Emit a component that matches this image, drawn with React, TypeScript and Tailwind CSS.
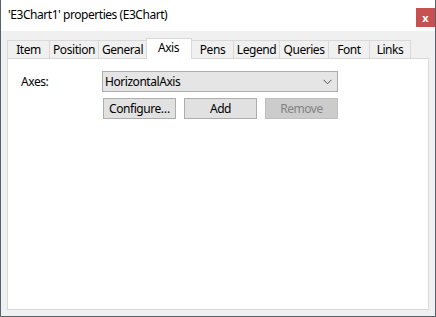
import React from "react";

const tabs = [
  { label: "Item", w: 42 },
  { label: "Position", w: 49 },
  { label: "General", w: 48 },
  { label: "Axis", w: 45, sel: true },
  { label: "Pens", w: 42 },
  { label: "Legend", w: 46 },
  { label: "Queries", w: 49 },
  { label: "Font", w: 41 },
  { label: "Links", w: 41 },
];

export default function App() {
  const font = { fontFamily: '"Noto Sans", "Open Sans", sans-serif' };
  return (
    <div
      className="w-[436px] h-[317px] flex flex-col bg-white border-l border-r border-b border-[#57616b] text-[12px] tracking-[-0.45px] text-black overflow-hidden"
      style={font}
    >
      {/* title bar */}
      <div className="h-[31px] flex items-start bg-white shrink-0">
        <div className="pl-[7px] pt-[6px] leading-[17px] flex-1">'E3Chart1' properties (E3Chart)</div>
        <div className="mt-[8px] w-[19px] h-[19px] bg-[#c75050] flex items-center justify-center text-white text-[11px] font-bold leading-none tracking-normal">
          x
        </div>
      </div>
      {/* body */}
      <div className="flex-1 bg-[#f0f0f0] flex flex-col px-[6px] pt-[7px] pb-[6px]">
        <div className="flex items-end h-[20px] relative z-10">
          {tabs.map((t, i) =>
            t.sel ? (
              <div
                key={t.label}
                className="h-[21px] -mb-[1px] bg-white border-t border-l border-r border-[#d9d9d9] flex items-start justify-center leading-[16px] pt-[1px] pr-[1px]"
                style={{ width: t.w + 1, marginRight: -1 }}
              >
                {t.label}
              </div>
            ) : (
              <div
                key={t.label}
                className={
                  "h-[18px] bg-[#f0f0f0] border-t border-l border-[#d9d9d9] flex items-center justify-center leading-[16px] pt-[1px] " +
                  (i === tabs.length - 1 ? "border-r" : "")
                }
                style={{ width: i === tabs.length - 1 ? t.w + 1 : t.w }}
              >
                {t.label}
              </div>
            )
          )}
        </div>
        <div className="flex-1 bg-white border border-[#d9d9d9] relative">
          <div className="flex flex-col pt-[12px] pl-[94px]">
            <div className="flex items-center h-[21px]">
              <div className="w-[0px] relative">
                <span className="absolute left-[-81px] top-[-9px] leading-[17px]">Axes:</span>
              </div>
              <div className="w-[236px] h-[21px] bg-[#e5e5e5] border border-[#acacac] flex items-center pl-[2px] pr-[5px] justify-between">
                <span className="leading-[17px]">HorizontalAxis</span>
                <svg width="9" height="6" viewBox="0 0 9 6" className="mt-[1px]">
                  <path d="M0.5 0.8 L4.5 4.8 L8.5 0.8" fill="none" stroke="#505050" strokeWidth="1" />
                </svg>
              </div>
            </div>
            <div className="flex gap-[8px] mt-[6px] pl-[1px]">
              <div className="w-[73px] h-[21px] bg-[#e1e1e1] border border-[#adadad] flex items-center justify-center leading-[17px]">
                Configure…
              </div>
              <div className="w-[73px] h-[21px] bg-[#e1e1e1] border border-[#adadad] flex items-center justify-center leading-[17px]">
                Add
              </div>
              <div className="w-[73px] h-[21px] bg-[#cccccc] border border-[#bfbfbf] flex items-center justify-center leading-[17px] text-[#838383]">
                Remove
              </div>
            </div>
          </div>
        </div>
      </div>
    </div>
  );
}
